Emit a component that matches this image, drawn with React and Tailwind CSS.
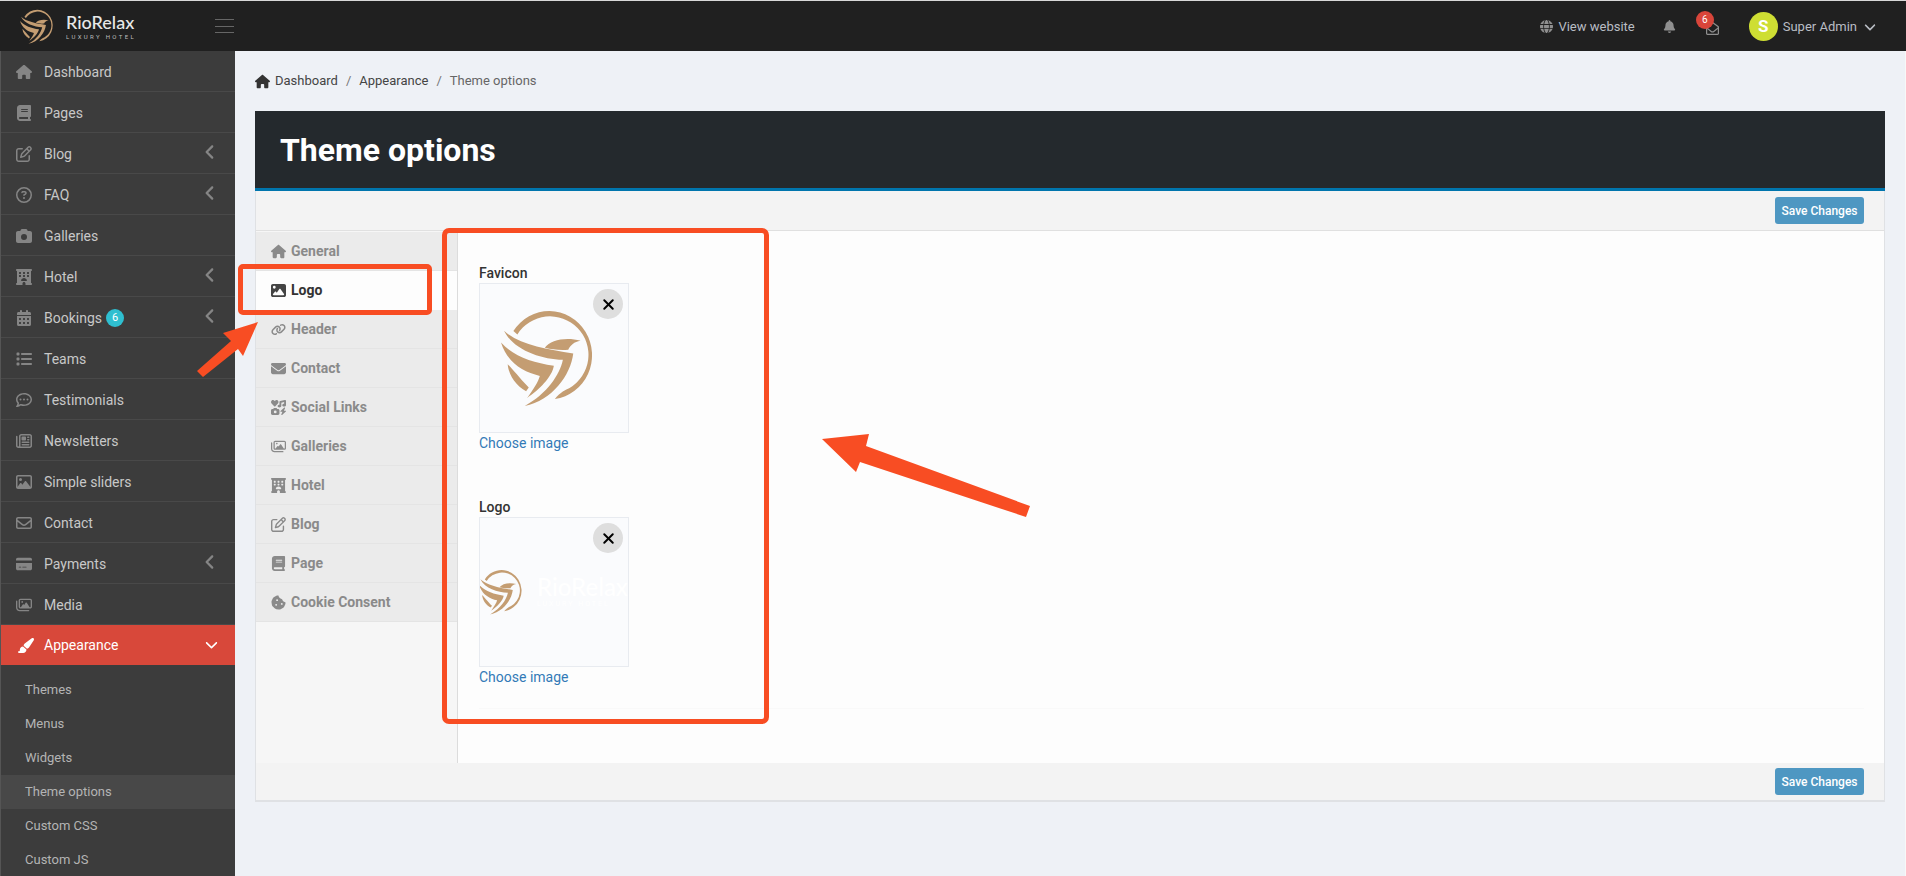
import {
  FaAngleDown,
  FaAngleLeft,
  FaBell,
  FaBook,
  FaCalendarDays,
  FaCamera,
  FaChevronDown,
  FaCookieBite,
  FaCreditCard,
  FaEnvelope,
  FaGlobe,
  FaHouse,
  FaHotel,
  FaIcons,
  FaImage,
  FaLink,
  FaList,
  FaPaintbrush,
  FaRegCircleQuestion,
  FaRegCommentDots,
  FaRegEnvelope,
  FaRegEnvelopeOpen,
  FaRegImage,
  FaRegImages,
  FaRegNewspaper,
  FaRegPenToSquare,
} from "react-icons/fa6";
import { X } from "lucide-react";

const menu = [
  { label: "Dashboard", icon: FaHouse },
  { label: "Pages", icon: FaBook },
  { label: "Blog", icon: FaRegPenToSquare, sub: true },
  { label: "FAQ", icon: FaRegCircleQuestion, sub: true },
  { label: "Galleries", icon: FaCamera },
  { label: "Hotel", icon: FaHotel, sub: true },
  { label: "Bookings", icon: FaCalendarDays, sub: true, badge: "6" },
  { label: "Teams", icon: FaList },
  { label: "Testimonials", icon: FaRegCommentDots },
  { label: "Newsletters", icon: FaRegNewspaper },
  { label: "Simple sliders", icon: FaRegImage },
  { label: "Contact", icon: FaRegEnvelope },
  { label: "Payments", icon: FaCreditCard, sub: true },
  { label: "Media", icon: FaRegImages },
];

const subMenu = ["Themes", "Menus", "Widgets", "Theme options", "Custom CSS", "Custom JS"];

const tabs = [
  { label: "General", icon: FaHouse },
  { label: "Logo", icon: FaImage, active: true },
  { label: "Header", icon: FaLink },
  { label: "Contact", icon: FaEnvelope },
  { label: "Social Links", icon: FaIcons },
  { label: "Galleries", icon: FaRegImages },
  { label: "Hotel", icon: FaHotel },
  { label: "Blog", icon: FaRegPenToSquare },
  { label: "Page", icon: FaBook },
  { label: "Cookie Consent", icon: FaCookieBite },
];

// brand mark, traced by eye from the favicon
function BrandMark({ className }) {
  return (
    <svg viewBox="187 255 275 287" className={className} fill="#c49d72">
      <path d="M224 318 A128 132 0 1 1 348 521 C365 500 380 493 392 488 A115 115 0 1 0 236 328 Z" />
      <path d="M196 317 C240 358 320 372 403 385 C395 450 340 525 258 542 C325 505 362 450 372 404 C305 402 225 375 196 317 Z" />
      <path d="M187 352 C225 395 280 412 345 422 C340 455 300 495 265 518 C285 490 298 470 303 452 C250 440 205 410 187 352 Z" />
      <path d="M207 417 C225 435 240 455 270 487 L262 498 C230 480 210 450 207 417 Z" />
      <path d="M318 368 C335 345 380 335 425 347 C405 350 395 360 388 374 C360 376 340 373 318 368 Z" />
    </svg>
  );
}

function TopBar() {
  return (
    <header className="h-[51px] shrink-0 bg-[#202020] border-t border-[#d8d8d8] flex items-center">
      <div className="w-[235px] flex items-center justify-between pl-[20px] pr-[1px]">
        <div className="flex items-center gap-[13px]">
          <BrandMark className="w-[33px] h-[35px]" />
          <div className="flex flex-col">
            <span className="text-[18px] leading-[20px] font-medium text-[#e8e8e8] font-['Lato',sans-serif]">RioRelax</span>
            <span className="text-[6px] leading-[9px] tracking-[2.35px] text-[#bdbdbd]">LUXURY HOTEL</span>
          </div>
        </div>
        <div className="w-[19px] flex flex-col gap-[5.5px]">
          <div className="h-px bg-[#666666]" />
          <div className="h-px bg-[#666666]" />
          <div className="h-px bg-[#666666]" />
        </div>
      </div>
      <div className="flex-1 flex items-center justify-end pr-[29px] pt-[1px] text-[13px] text-[#b9bdc4]">
        <FaGlobe className="text-[13px] text-[#8f8f8f] mr-[5px]" />
        <span>View website</span>
        <FaBell className="text-[13px] text-[#8f8f8f] ml-[28px]" />
        <div className="relative ml-[30px]">
          <FaRegEnvelopeOpen className="text-[13px] text-[#8f8f8f] mt-[3px]" />
          <span className="absolute -left-[10px] -top-[8px] w-[18px] h-[18px] rounded-full bg-[#d9453a] text-white text-[10px] flex items-center justify-center">
            6
          </span>
        </div>
        <div className="ml-[30px] w-[29px] h-[29px] rounded-full bg-[#cede33] text-white text-[17px] font-bold flex items-center justify-center">
          S
        </div>
        <span className="ml-[5px]">Super Admin</span>
        <FaAngleDown className="text-[14px] ml-[6px]" />
      </div>
    </header>
  );
}

function Sidebar() {
  return (
    <aside className="w-[235px] shrink-0 bg-[#3c3c3c] border-l border-[#555555] text-[14px] text-[#c8c8c8] overflow-hidden">
      {menu.map((item) => (
        <div key={item.label} className="h-[41px] pt-[2px] border-b border-[#494949] flex items-center pl-[15px] pr-[16px]">
          <span className="w-[28px] flex items-center">
            <item.icon className="text-[16px] text-[#858585]" />
          </span>
          <span>{item.label}</span>
          {item.badge && (
            <span className="ml-[4px] w-[18px] h-[18px] rounded-full bg-[#2fbfd0] text-white text-[11px] flex items-center justify-center">
              {item.badge}
            </span>
          )}
          {item.sub && <FaAngleLeft className="ml-auto text-[18px] text-[#858585] -mt-[4px]" />}
        </div>
      ))}
      <div className="h-[40px] bg-[#d8483a] text-white flex items-center pl-[16px] pr-[17px]">
        <span className="w-[27px] flex items-center">
          <FaPaintbrush className="text-[17px]" />
        </span>
        <span>Appearance</span>
        <FaChevronDown className="ml-auto text-[13px] -mt-[2px]" />
      </div>
      <div className="pt-[8px] text-[13px] text-[#b4b4b4]">
        {subMenu.map((name) => (
          <div
            key={name}
            className={`h-[34px] flex items-center pl-[24px] ${name === "Theme options" ? "bg-[#484848]" : ""}`}
          >
            {name}
          </div>
        ))}
      </div>
    </aside>
  );
}

function SaveBar({ className }) {
  return (
    <div className={`bg-[#f3f3f3] flex items-center justify-end pr-[20px] ${className}`}>
      <button className="w-[89px] h-[27px] rounded-[3px] bg-[#4e97c2] text-white text-[12px] font-medium">
        Save Changes
      </button>
    </div>
  );
}

function ImageField({ label, children }) {
  return (
    <div>
      <div className="h-[20px] leading-[20px] text-[14px] font-medium text-[#333333]">{label}</div>
      <div className="relative w-[150px] h-[150px] bg-[#fafbfd] border border-[#e8ebf0] overflow-hidden">
        {children}
        <div className="absolute top-[5px] right-[5px] w-[30px] h-[30px] rounded-full bg-[#dedede] flex items-center justify-center">
          <X size={17} strokeWidth={2.8} color="#000000" />
        </div>
      </div>
      <div className="h-[20px] leading-[20px] text-[14px] text-[#337ab7]">Choose image</div>
    </div>
  );
}

function ThemePanel() {
  return (
    <div className="border-x border-b-2 border-[#dfe1e4] bg-[#fdfdfd]">
      <div className="h-[80px] pt-[1px] bg-[#24292d] border-b-[3px] border-[#0075ad] -mx-px flex items-center pl-[25px]">
        <h1 className="text-[32px] font-bold text-white">Theme options</h1>
      </div>
      <SaveBar className="h-[40px] border-b border-[#e0e0e0]" />
      <div className="flex h-[532px]">
        <div className="w-[202px] shrink-0 bg-[#f6f6f6] border-r border-[#dcdcdc] pt-[1px]">
          {tabs.map((tab) => (
            <div
              key={tab.label}
              className={`h-[39px] flex items-center pl-[15px] text-[14px] font-bold border-b ${
                tab.active
                  ? "bg-[#fdfdfd] text-[#333333] border-[#fdfdfd]"
                  : "bg-[#ebebeb] text-[#8a8a8a] border-[#e4e4e4]"
              }`}
            >
              <span className="w-[20px] flex items-center">
                <tab.icon className={`text-[15px] ${tab.active ? "text-[#444444]" : "text-[#8a8a8a]"}`} />
              </span>
              {tab.label}
            </div>
          ))}
        </div>
        <div className="flex-1 pl-[21px] pr-[20px] pt-[32px]">
          <div className="flex flex-col gap-[44px]">
            <ImageField label="Favicon">
              <div className="h-full flex items-center justify-center">
                <BrandMark className="w-[92px] h-[96px] mr-[14px]" />
              </div>
            </ImageField>
            <ImageField label="Logo">
              <div className="h-full flex items-center -ml-[1px]">
                <BrandMark className="w-[43px] h-[46px] shrink-0" />
                <div className="ml-[15px] flex flex-col text-white">
                  <span className="text-[24px] leading-[24px] font-medium font-['Lato',sans-serif]">RioRelax</span>
                  <span className="text-[7px] leading-[10px] tracking-[2px] whitespace-nowrap">LUXURY HOTEL</span>
                </div>
              </div>
            </ImageField>
          </div>
          <div className="mt-[21px] border-t border-[#f9f9f9]" />
        </div>
      </div>
      <SaveBar className="h-[37px]" />
    </div>
  );
}

// red marks drawn over the screenshot
function Annotations() {
  return (
    <>
      <div className="absolute left-[238px] top-[264px] w-[194px] h-[51px] border-[5px] border-[#f84d23] rounded-[5px]" />
      <div className="absolute left-[442px] top-[228px] w-[327px] h-[496px] border-[5px] border-[#f84d23] rounded-[7px]" />
      <svg className="absolute left-0 top-0 w-[1906px] h-[876px] pointer-events-none" viewBox="0 0 1906 876" fill="#f84d23">
        <polygon points="258,322 223,333 231,341 197,371 203,377 238,349 243,356" />
        <polygon points="822,439 869,434 866,446 1030,506 1026,517 860,462 856,472" />
      </svg>
    </>
  );
}

export default function App() {
  return (
    <div className="relative w-full h-[876px] overflow-hidden flex flex-col bg-[#eef1f6] font-['Roboto',sans-serif]">
      <TopBar />
      <div className="flex-1 flex min-h-0">
        <Sidebar />
        <main className="flex-1 pl-[20px] pr-[20px] border-r border-[#f8f8f8]">
          <div className="h-[60px] flex items-center gap-[8px] text-[13px] text-[#444444]">
            <span className="flex items-center gap-[5px]">
              <FaHouse className="text-[15px] text-[#333333]" />
              Dashboard
            </span>
            <span className="text-[#777777]">/</span>
            <span>Appearance</span>
            <span className="text-[#777777]">/</span>
            <span className="text-[#666666]">Theme options</span>
          </div>
          <ThemePanel />
        </main>
      </div>
      <Annotations />
    </div>
  );
}
